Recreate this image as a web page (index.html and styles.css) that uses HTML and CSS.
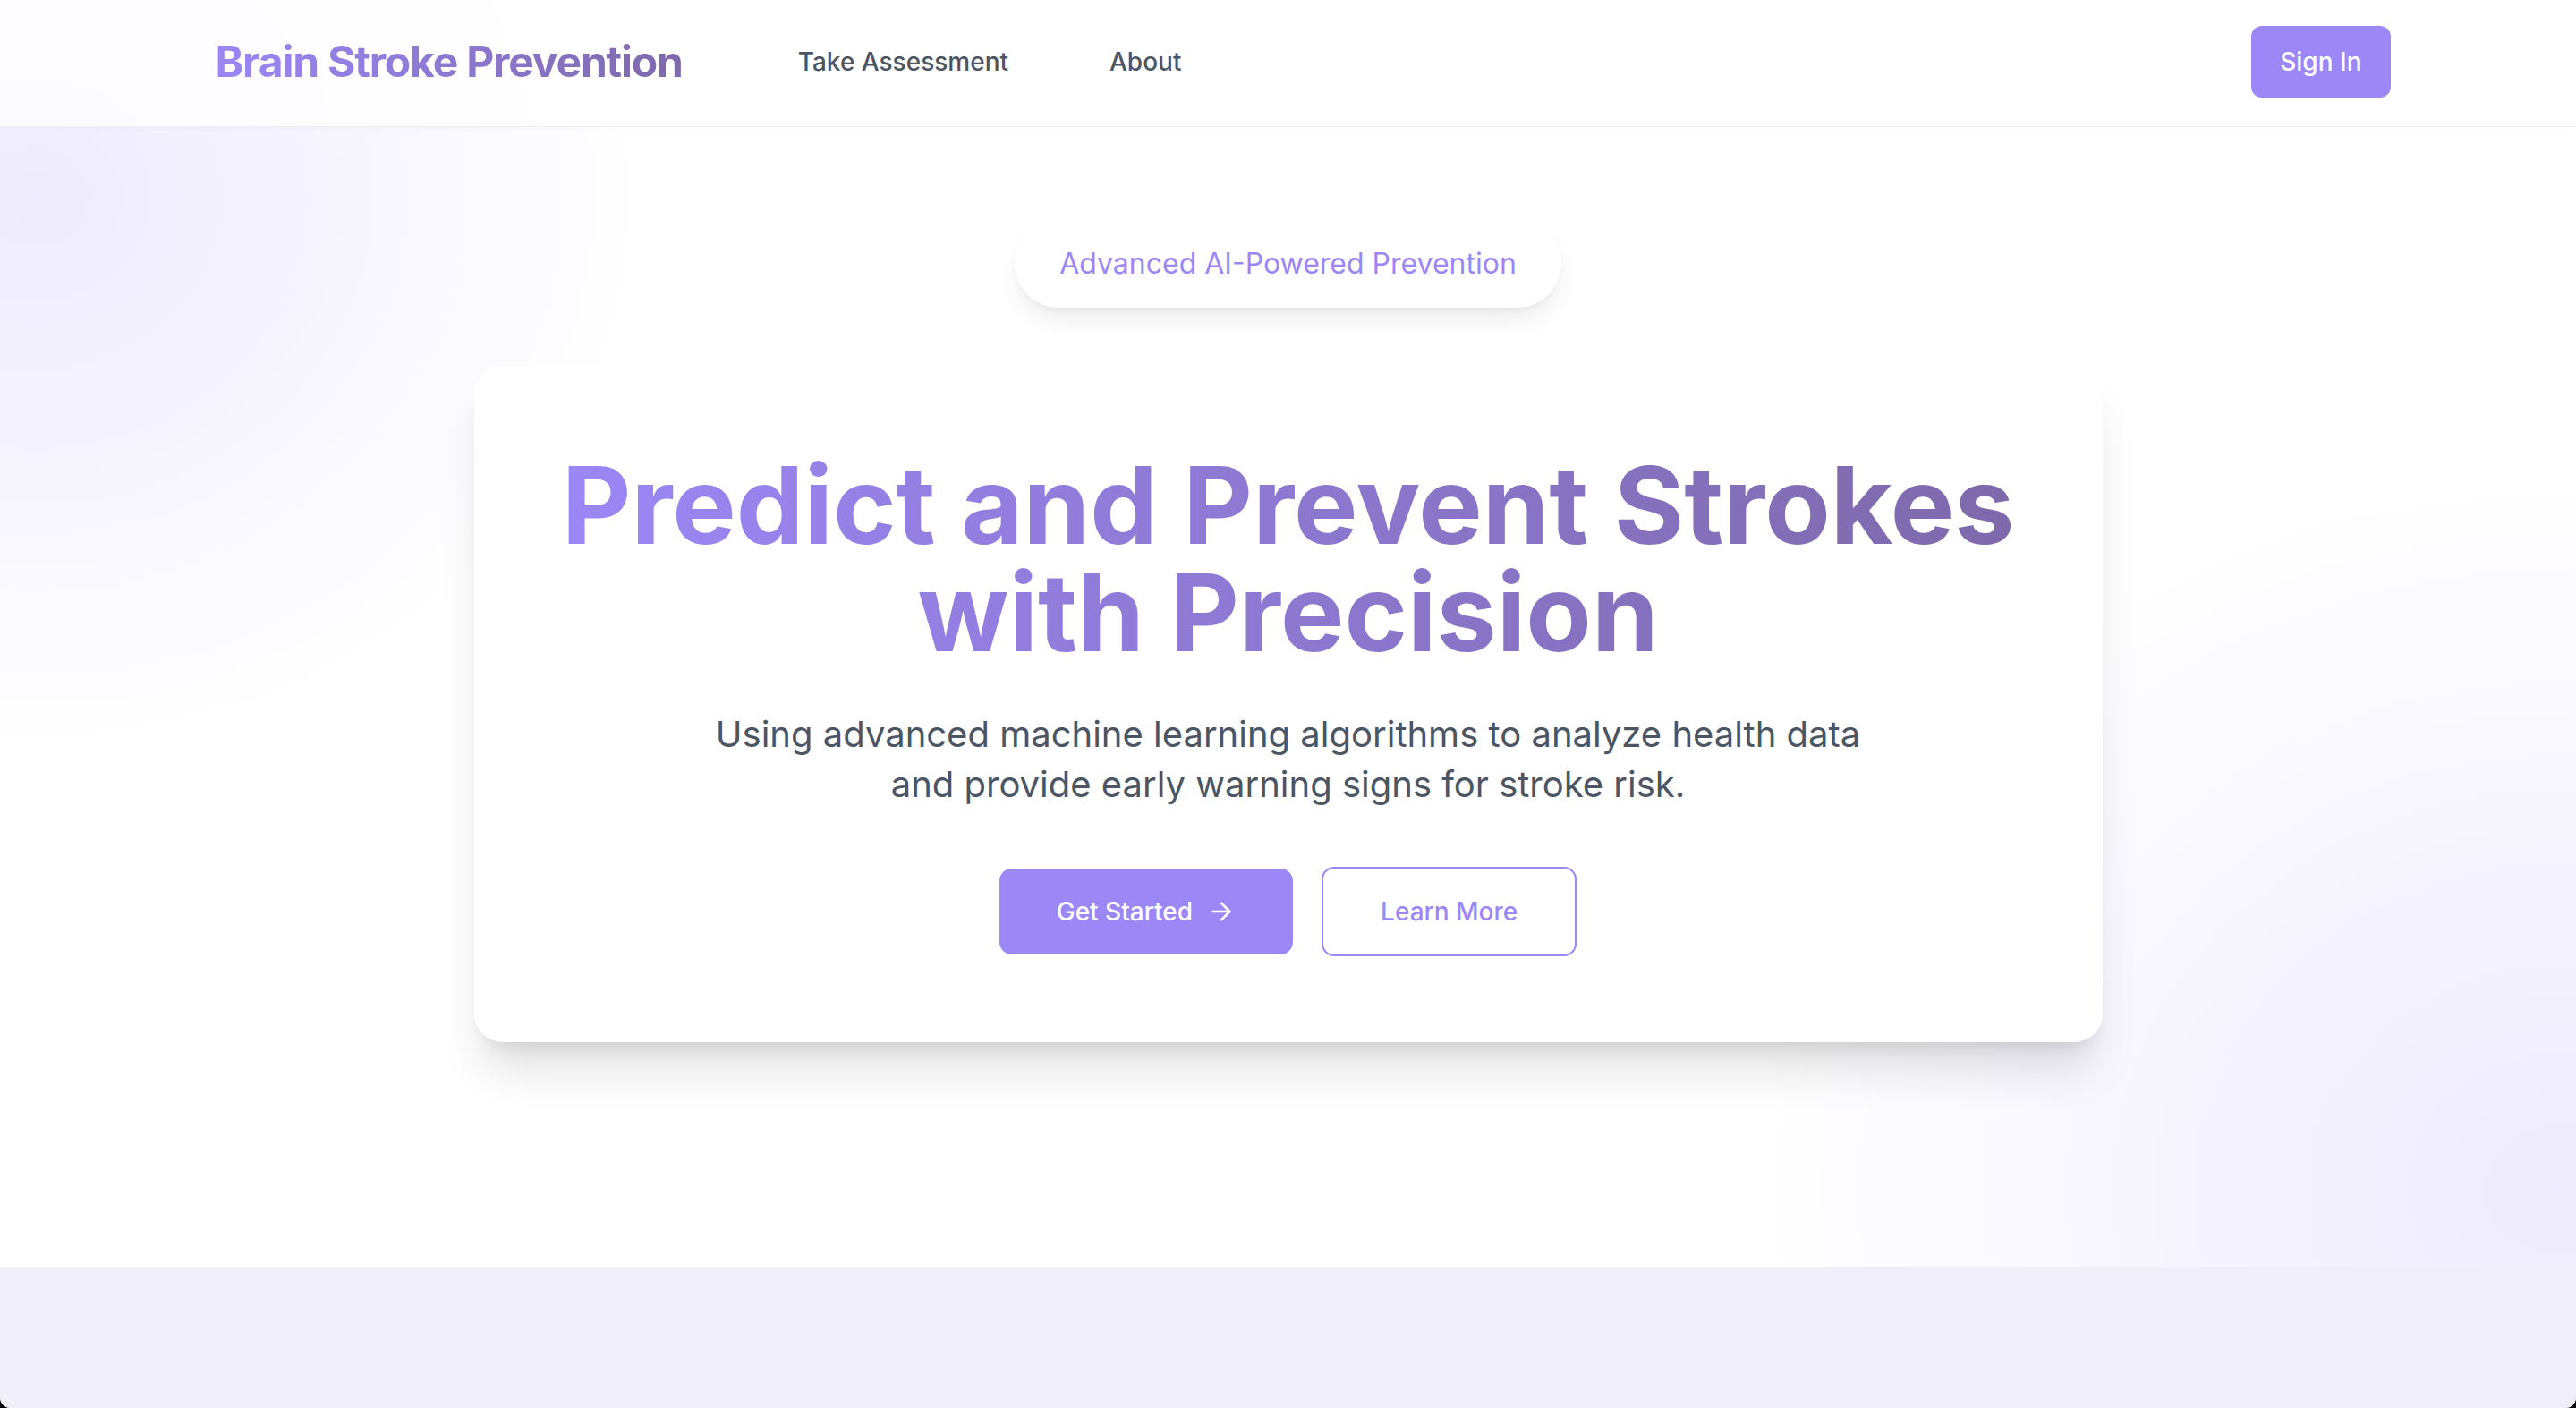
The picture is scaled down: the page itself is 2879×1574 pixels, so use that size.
FILE: index.html
```html
<!DOCTYPE html>
<html lang="en">
<head>
<meta charset="utf-8">
<title>Brain Stroke Prevention</title>
<link rel="stylesheet" href="styles.css">
</head>
<body>
<div class="app">
  <header class="topbar">
    <div class="container bar">
      <div class="left">
        <a class="logo" href="#">Brain Stroke Prevention</a>
        <nav class="nav">
          <a href="#">Take Assessment</a>
          <a href="#">About</a>
        </nav>
      </div>
      <a class="btn-signin" href="#">Sign In</a>
    </div>
  </header>

  <main class="hero">
    <div class="badge">Advanced AI-Powered Prevention</div>
    <div class="card">
      <h1 class="title"><span class="line">Predict and Prevent Strokes</span><span class="line">with Precision</span></h1>
      <p class="lead">Using advanced machine learning algorithms to analyze health data and provide early warning signs for stroke risk.</p>
      <div class="actions">
        <a class="btn btn-primary" href="#">Get Started
          <svg class="arrow" viewBox="0 0 24 24" fill="none" stroke="currentColor" stroke-width="2" stroke-linecap="round" stroke-linejoin="round"><path d="M5 12h14"/><path d="m12 5 7 7-7 7"/></svg>
        </a>
        <a class="btn btn-outline" href="#">Learn More</a>
      </div>
    </div>
  </main>

  <section class="band"></section>
</div>
</body>
</html>
```

FILE: styles.css
```css
* { box-sizing: border-box; }
html { background: #000; }
body {
  margin: 0;
  font-family: Inter, "Noto Sans", sans-serif;
  color: #1f2937;
}
a { text-decoration: none; color: inherit; }

.app {
  min-height: 1574px;
  display: flex;
  flex-direction: column;
  border-radius: 0 0 12px 12px;
  overflow: hidden;
  background:
    radial-gradient(ellipse 680px 620px at 40px 220px, rgba(155,135,245,0.17) 0%, rgba(155,135,245,0.10) 40%, rgba(155,135,245,0) 100%),
    radial-gradient(ellipse 900px 800px at 2860px 1330px, rgba(155,135,245,0.17) 0%, rgba(155,135,245,0.10) 40%, rgba(155,135,245,0) 100%),
    #ffffff;
}

.topbar {
  height: 142px;
  background: rgba(255,255,255,0.8);
  border-bottom: 1px solid #eeeef2;
  box-shadow: 0 2px 4px rgba(0,0,0,0.02);
}
.container {
  width: 2560px;
  max-width: 100%;
  margin: 0 auto;
  padding: 0 48px;
}
.bar {
  height: 138px;
  display: flex;
  align-items: center;
  justify-content: space-between;
}
.left { display: flex; align-items: center; }
.logo {
  margin-left: 33px;
  font-size: 48px;
  font-weight: 700;
  letter-spacing: -1.2px;
  line-height: 64px;
  background: linear-gradient(90deg, #9b87f5, #7e69ab);
  -webkit-background-clip: text;
  background-clip: text;
  color: transparent;
}
.nav {
  display: flex;
  gap: 113px;
  margin-left: 129px;
}
.nav a {
  font-size: 28px;
  font-weight: 500;
  color: #4b5563;
  line-height: 40px;
}
.btn-signin {
  display: flex;
  align-items: center;
  justify-content: center;
  height: 80px;
  padding: 0 32px;
  border-radius: 12px;
  background: #9b87f5;
  color: #fff;
  font-size: 28px;
  font-weight: 500;
}

.hero {
  flex: 1;
  display: flex;
  flex-direction: column;
  align-items: center;
  padding: 103px 0 247px;
}
.badge {
  height: 99px;
  padding: 0 50px;
  display: flex;
  align-items: center;
  border-radius: 999px;
  background: #fff;
  color: #9b87f5;
  font-size: 32px;
  box-shadow: 0 16px 30px -8px rgba(0,0,0,0.10), 0 4px 10px -4px rgba(0,0,0,0.06);
  margin-bottom: 65px;
}
.card {
  width: 1820px;
  padding: 96px;
  background: #fff;
  border-radius: 32px;
  box-shadow: 0 40px 50px -10px rgba(0,0,0,0.12), 0 16px 20px -12px rgba(0,0,0,0.10);
  display: flex;
  flex-direction: column;
  align-items: center;
  text-align: center;
}
.title {
  align-self: stretch;
  margin: 0 0 48px;
  font-size: 120px;
  line-height: 120px;
  font-weight: 700;
  background: linear-gradient(90deg, #9b87f5, #7e69ab);
  -webkit-background-clip: text;
  background-clip: text;
  color: transparent;
}
.title .line { display: block; }
.lead {
  margin: 0 0 64px;
  max-width: 1344px;
  font-size: 40px;
  line-height: 56px;
  color: #4b5563;
}
.actions {
  display: flex;
  align-items: center;
  gap: 32px;
}
.btn {
  display: flex;
  align-items: center;
  justify-content: center;
  font-size: 28px;
  font-weight: 500;
  border-radius: 14px;
}
.btn-primary {
  height: 96px;
  padding: 0 64px;
  background: #9b87f5;
  color: #fff;
}
.arrow { width: 32px; height: 32px; margin-left: 16px; }
.btn-outline {
  height: 100px;
  padding: 0 64px;
  border: 2px solid #9b87f5;
  background: #fff;
  color: #9b87f5;
}

.band {
  height: 158px;
  background: #f0eef9;
}
```
